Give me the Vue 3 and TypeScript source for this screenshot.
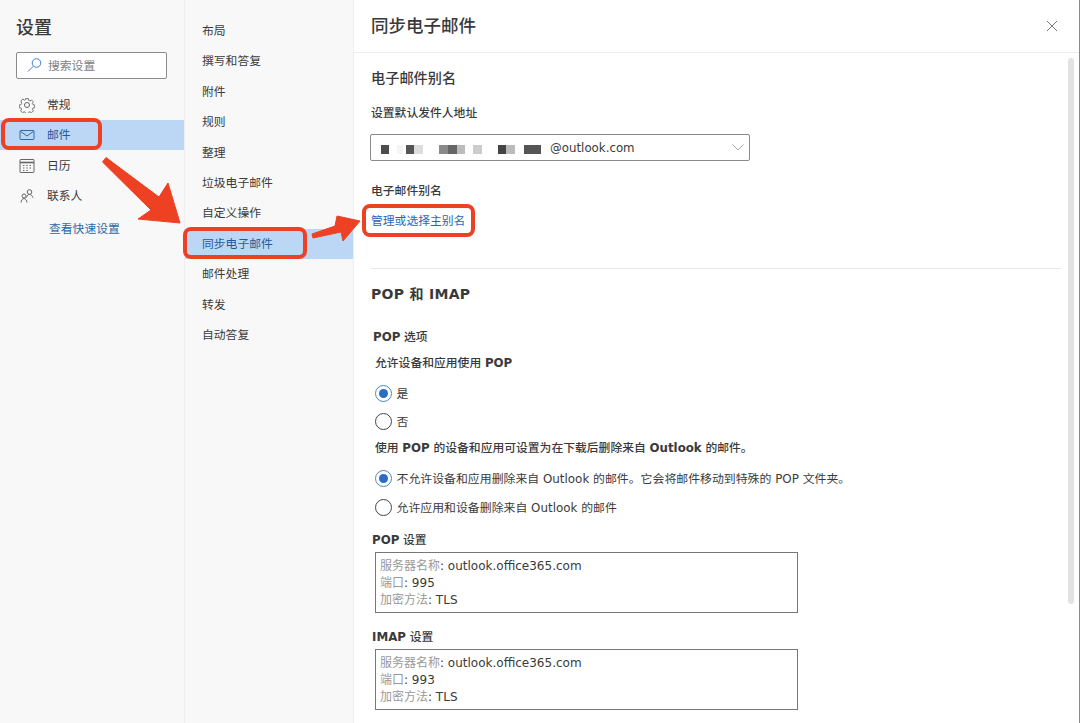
<script setup lang="ts">
interface NavItem { label: string; icon: string; active?: boolean }
const navItems: NavItem[] = [
  { label: '常规', icon: 'gear' },
  { label: '邮件', icon: 'mail', active: true },
  { label: '日历', icon: 'cal' },
  { label: '联系人', icon: 'people' },
]
const subItems = ['布局', '撰写和答复', '附件', '规则', '整理', '垃圾电子邮件', '自定义操作', '同步电子邮件', '邮件处理', '转发', '自动答复']
const activeSub = '同步电子邮件'
const mosaic: { w: number; c: string }[] = [
  { w: 8, c: '#4d4d4d' }, { w: 8, c: 'transparent' }, { w: 6, c: '#f4f4f4' }, { w: 3, c: 'transparent' },
  { w: 8, c: '#555' }, { w: 9, c: '#ddd' }, { w: 16, c: 'transparent' }, { w: 9, c: '#8a8a8a' },
  { w: 9, c: '#666' }, { w: 8, c: '#bbb' }, { w: 8, c: 'transparent' }, { w: 9, c: '#ccc' },
  { w: 16, c: 'transparent' }, { w: 8, c: '#444' }, { w: 9, c: '#bbb' }, { w: 9, c: 'transparent' }, { w: 17, c: '#555' },
]
const servers = [
  { title: 'POP', port: '995', cls: 'pop-title' },
  { title: 'IMAP', port: '993', cls: 'imap-title' },
]
</script>

<template>
  <div class="page">
    <aside class="left">
      <div class="left-title">设置</div>
      <div class="search">
        <svg class="search-icon" width="15" height="15" viewBox="0 0 15 15" fill="none" stroke="#3f7fd0" stroke-width="1">
          <circle cx="9.500" cy="5" r="4.300" />
          <path d="M6.300 8.200 1 13.500" />
        </svg>
        <span>搜索设置</span>
      </div>
      <nav class="nav">
        <div v-for="item in navItems" :key="item.label" class="nav-row" :class="{ active: item.active }">
          <svg class="nav-icon" width="16" height="16" viewBox="0 0 16 16" fill="none" :stroke="item.active ? '#2b6aa8' : '#666'" stroke-width="1">
            <template v-if="item.icon === 'gear'">
              <circle cx="8" cy="8" r="2.500" />
              <path d="M6.500.9h3l.4 2 1.300.6 1.800-1.100 2.100 2.100-1.100 1.800.6 1.300 2 .4v3l-2 .4-.6 1.300 1.100 1.800-2.100 2.100-1.800-1.100-1.300.6-.4 2h-3l-.4-2-1.300-.6-1.800 1.100-2.100-2.100 1.100-1.800-.6-1.300-2-.4v-3l2-.4.6-1.300L1.300 3.500l2.100-2.100 1.800 1.100 1.300-.6z" transform="translate(.8 .8) scale(.9)" />
            </template>
            <template v-else-if="item.icon === 'mail'">
              <rect x="1" y="3.500" width="14" height="9" rx=".8" />
              <path d="M1.300 4.200 8 9l6.700-4.800" />
            </template>
            <template v-else-if="item.icon === 'cal'">
              <rect x="1" y="1.500" width="14" height="13" rx=".5" />
              <path d="M1 4.500h14" stroke-width="1.600" />
              <path d="M4 7.500h1.400M7.300 7.500h1.400M10.600 7.500H12M4 10h1.400M7.300 10h1.400M10.600 10H12M4 12.500h1.400M7.300 12.500h1.400" />
            </template>
            <template v-else>
              <circle cx="10.500" cy="4" r="2.300" />
              <path d="M7.500 9.500c.4-1.800 1.500-3 3-3s3 1.200 3.400 3.200" />
              <circle cx="5" cy="8" r="2" />
              <path d="M2 14.500c.2-2.200 1.400-4 3-4s2.800 1.800 3 4" />
            </template>
          </svg>
          <span>{{ item.label }}</span>
        </div>
      </nav>
      <a class="quick">查看快速设置</a>
    </aside>

    <section class="mid">
      <div v-for="sub in subItems" :key="sub" class="sub-row" :class="{ active: sub === activeSub }">{{ sub }}</div>
    </section>

    <main class="right">
      <header class="head">
        <span>同步电子邮件</span>
        <svg width="12" height="12" viewBox="0 0 12 12" stroke="#777" stroke-width="1" fill="none">
          <path d="M1 1l10 10M11 1 1 11" />
        </svg>
      </header>
      <div class="scrollbar"></div>
      <div class="content">
        <h2 class="h-alias">电子邮件别名</h2>
        <div class="label l-sender">设置默认发件人地址</div>
        <div class="select">
          <span class="mosaic">
            <i v-for="(m, i) in mosaic" :key="i" :style="{ width: m.w + 'px', background: m.c }"></i>
          </span>
          <span class="addr">@outlook.com</span>
          <svg width="12" height="7" viewBox="0 0 12 7" fill="none" stroke="#aaa" stroke-width="1"><path d="M.5.5 6 6l5.500-5.500" /></svg>
        </div>
        <div class="label l-alias">电子邮件别名</div>
        <a class="manage">管理或选择主别名</a>
        <hr class="rule" />
        <h2 class="h-pop">POP 和 IMAP</h2>
        <div class="label pop-opt"><b>POP</b> 选项</div>
        <div class="label pop-allow">允许设备和应用使用 <b>POP</b></div>
        <div class="radio r1"><span class="dot on"></span><span class="rtext">是</span></div>
        <div class="radio r2"><span class="dot"></span><span class="rtext">否</span></div>
        <div class="label pop-desc">使用 <b>POP</b> 的设备和应用可设置为在下载后删除来自 <b>Outlook</b> 的邮件。</div>
        <div class="radio r3"><span class="dot on"></span><span class="rtext">不允许设备和应用删除来自 Outlook 的邮件。它会将邮件移动到特殊的 POP 文件夹。</span></div>
        <div class="radio r4"><span class="dot"></span><span class="rtext">允许应用和设备删除来自 Outlook 的邮件</span></div>
        <template v-for="s in servers" :key="s.title">
          <div class="label" :class="s.cls"><b>{{ s.title }}</b> 设置</div>
          <div class="box">
            <div><span class="key">服务器名称</span>: outlook.office365.com</div>
            <div><span class="key">端口</span>: {{ s.port }}</div>
            <div><span class="key">加密方法</span>: TLS</div>
          </div>
        </template>
      </div>
    </main>

    <svg class="marks" width="1080" height="723" viewBox="0 0 1080 723">
      <g fill="none" stroke="#ee4023" stroke-width="4">
        <rect x="3" y="120" width="97" height="28" rx="6" />
        <rect x="185" y="229" width="120" height="28" rx="6" />
        <rect x="364" y="206" width="109" height="29" rx="6" />
      </g>
      <g fill="#ee4023" stroke="#ee4023" stroke-width="1" stroke-linejoin="round">
        <path d="M102.500 162 106 157.500 159 197 168 183 180 223 138 219 151 210Z" />
        <path d="M312 234 335 226 337 216 360 221 343 241 341 232 313 238Z" />
      </g>
    </svg>
  </div>
</template>

<style>
html, body { margin: 0; background: #fff; }
</style>

<style scoped>
.page {
  position: relative;
  display: flex;
  width: 1080px;
  height: 723px;
  box-sizing: border-box;
  border-right: 1px solid #8a8a8a;
  overflow: hidden;
  background: #fff;
  color: #3a3a3a;
  font: 11.8px/18px "DejaVu Sans", "Noto Sans CJK SC", sans-serif;
}
.left {
  width: 184px;
  flex: none;
  background: #f8f8f8;
  padding-top: 16px;
  box-sizing: border-box;
}
.left-title {
  margin-left: 16px;
  font-size: 18px;
  line-height: 24px;
  font-weight: 500;
}
.search {
  display: flex;
  align-items: center;
  box-sizing: border-box;
  width: 151px;
  height: 27px;
  margin: 12px 0 0 16px;
  padding-left: 10px;
  gap: 6px;
  border: 1px solid #8a8a8a;
  border-radius: 2px;
  background: #fff;
  color: #808080;
}
.nav { margin-top: 10px; }
.nav-row {
  display: flex;
  align-items: center;
  box-sizing: border-box;
  height: 30.500px;
  padding: 1px 0 0 19px;
  gap: 12px;
}
.nav-row.active { background: #bcd6f5; color: #1f5aa0; }
.quick {
  display: block;
  margin: 8.500px 0 0 49px;
  color: #2b6aa8;
}
.mid {
  width: 170px;
  flex: none;
  box-sizing: border-box;
  padding-top: 16px;
  background: #f8f8f8;
  border-left: 1px solid #eee;
  border-right: 1px solid #eee;
}
.sub-row {
  height: 30.400px;
  line-height: 30.400px;
  padding-left: 17px;
}
.sub-row.active { background: #bcd6f5; color: #1f5aa0; }
.right { position: relative; flex: 1; min-width: 0; }
.head {
  display: flex;
  align-items: center;
  justify-content: space-between;
  box-sizing: border-box;
  height: 53px;
  padding: 0 21px 0 17px;
  border-bottom: 1px solid #eee;
  font-size: 17.500px;
  font-weight: 500;
}
.scrollbar {
  position: absolute;
  top: 58px;
  right: 5px;
  width: 6px;
  height: 546px;
  border-radius: 3px;
  background: #e2e2e2;
}
.content { padding: 15px 0 0 17px; }
h2 {
  margin: 0;
  font-size: 14px;
  line-height: 20px;
  font-weight: 700;
}
.h-alias { font-weight: 500; font-size: 14.200px; }
.label {
  box-sizing: border-box;
  height: 18px;
  padding-top: 1px;
  font-weight: 500;
  white-space: nowrap;
}
.label b { font-weight: 700; }
.l-sender { margin-top: 16px; padding-top: 0; }
.select {
  display: flex;
  align-items: center;
  box-sizing: border-box;
  width: 380px;
  height: 27px;
  margin: 12px 0 0 -1px;
  padding: 0 5px 0 10px;
  border: 1px solid #8a8a8a;
  border-radius: 2px;
}
.mosaic { display: flex; height: 9px; margin-top: 3px; }
.mosaic i { display: block; height: 9px; }
.addr { flex: 1; margin-left: 9px; }
.l-alias { margin-top: 21px; padding-top: 0; }
.manage { display: block; margin-top: 12px; height: 18px; color: #1f66c1; }
.rule { margin: 38px 18px 0 0; height: 1px; border: 0; background: #e8e8e8; }
.h-pop { margin-top: 15px; letter-spacing: .3px; }
.pop-opt { margin: 24px 0 0 2px; padding-top: 0; }
.pop-allow { margin: 8px 0 0 4px; padding-top: 0; }
.radio {
  display: flex;
  align-items: center;
  gap: 5px;
  height: 18px;
  margin-left: 3.500px;
  white-space: nowrap;
}
.rtext { padding-top: 1px; font-size: 11.900px; }
.r1 { margin-top: 12px; }
.r2 { margin-top: 10.500px; }
.r3 { margin-top: 12.500px; }
.r4 { margin-top: 11px; }
.dot {
  position: relative;
  flex: none;
  box-sizing: border-box;
  width: 17px;
  height: 17px;
  border: 1px solid #444;
  border-radius: 50%;
  background: #fff;
}
.dot.on { border-color: #4a86d0; }
.dot.on::after {
  content: "";
  position: absolute;
  inset: 3px;
  border-radius: 50%;
  background: #2b6cc4;
}
.pop-desc { margin: 8px 0 0 4px; padding-top: 0; }
.pop-title { margin: 15px 0 0 1px; padding-top: 0; }
.imap-title { margin: 15px 0 0 1px; padding-top: 0; }
.box {
  box-sizing: border-box;
  width: 423px;
  height: 61px;
  margin: 3px 0 0 4px;
  padding: 5px 4px;
  border: 1px solid #777;
  font-size: 12px;
  line-height: 17px;
}
.key { color: #999; }
.marks { position: absolute; top: 0; left: 0; pointer-events: none; }
</style>
